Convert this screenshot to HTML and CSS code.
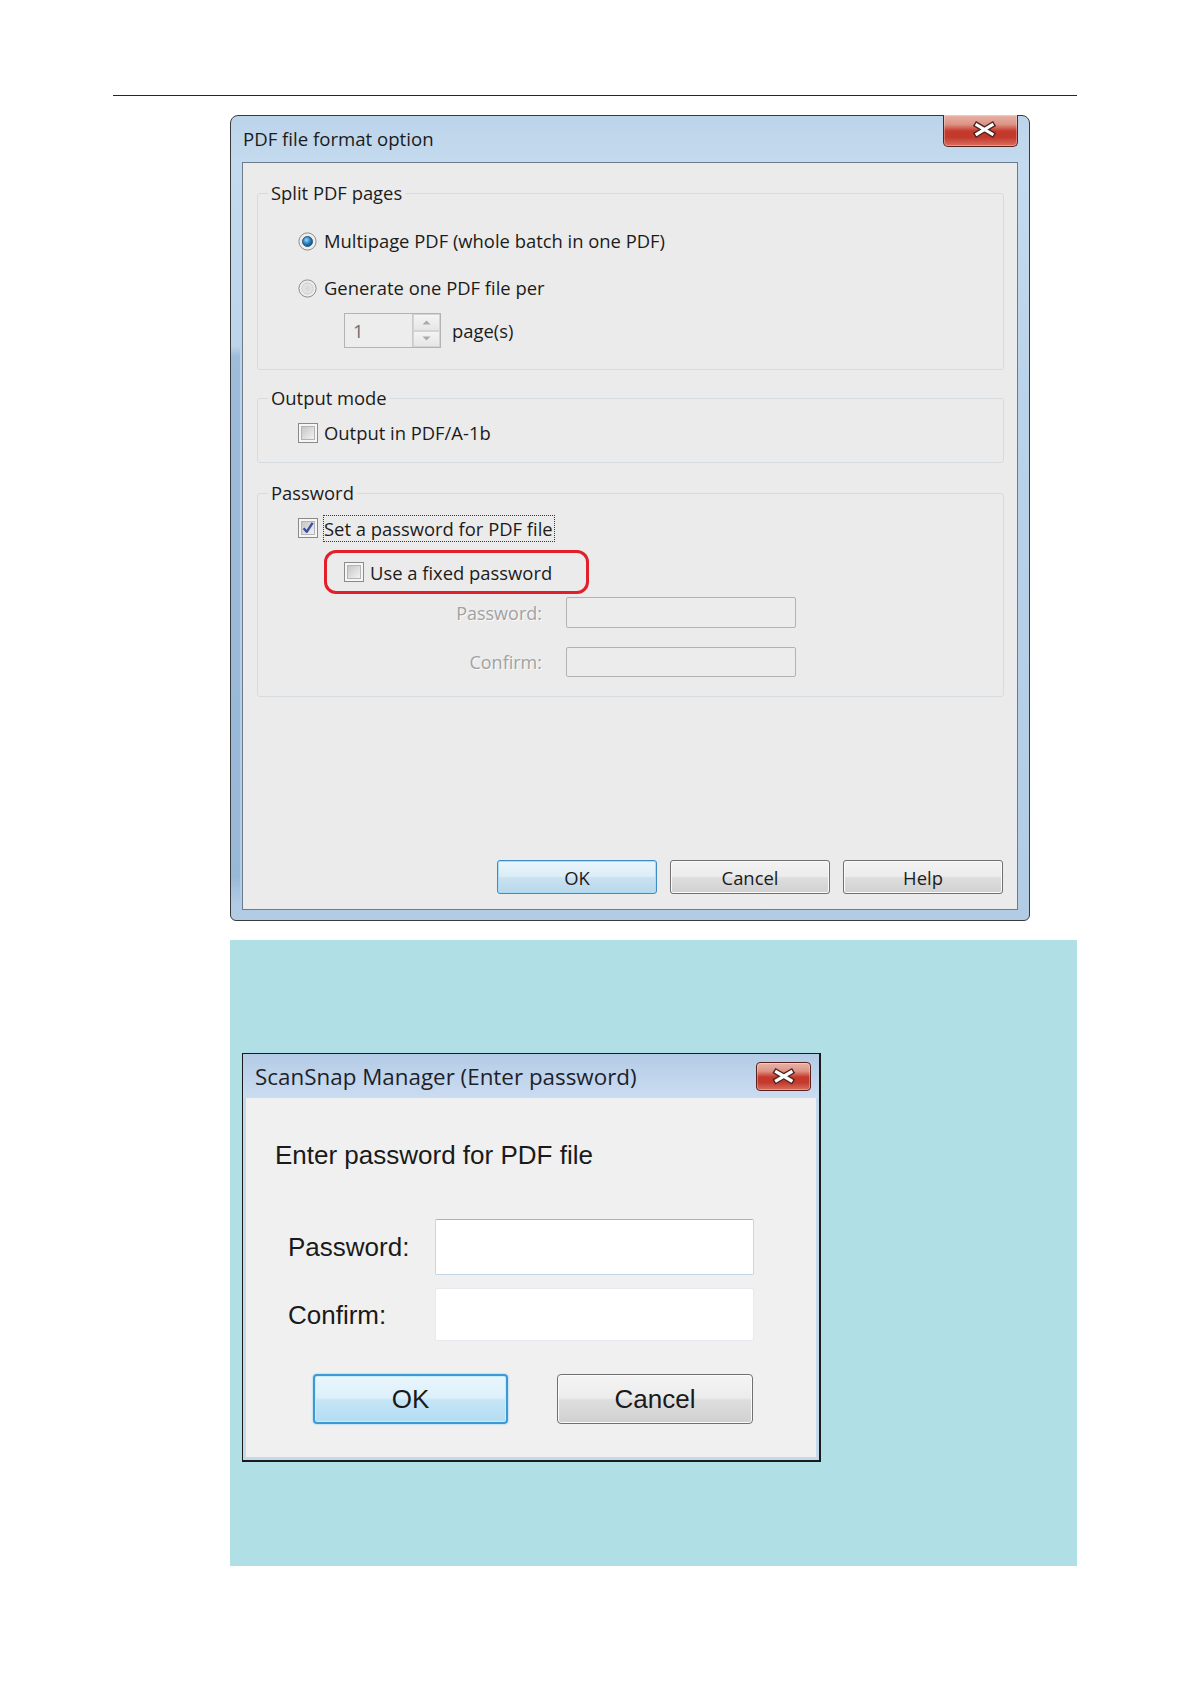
FILE: index.html
```html
<!DOCTYPE html>
<html lang="en">
<head>
<meta charset="utf-8">
<title>PDF file format option</title>
<link rel="stylesheet" href="styles.css">
</head>
<body>
<div class="page">
  <div class="rule"></div>

  <div class="win7">
    <div class="titlebar">
      <span class="title">PDF file format option</span>
      <div class="close close-lg">
        <svg width="75" height="31" viewBox="0 0 75 31">
          <path d="M33 10 L48 19 M48 10 L33 19" stroke="#4d2420" stroke-width="6" stroke-linecap="square"/>
          <path d="M33 10 L48 19 M48 10 L33 19" stroke="#ffffff" stroke-width="3.2" stroke-linecap="square"/>
        </svg>
      </div>
    </div>
    <div class="client">
      <fieldset class="group g1">
        <legend>Split PDF pages</legend>
        <div class="gbody gb1">
          <div class="row">
            <svg class="radio" width="19" height="19" viewBox="0 0 19 19">
              <defs>
                <radialGradient id="rf1" cx="50%" cy="50%" r="60%"><stop offset="0" stop-color="#dadada"/><stop offset="1" stop-color="#f7f7f7"/></radialGradient>
                <radialGradient id="rd1" cx="40%" cy="35%" r="70%"><stop offset="0" stop-color="#9ad6f8"/><stop offset="0.5" stop-color="#2a86c6"/><stop offset="1" stop-color="#10487a"/></radialGradient>
              </defs>
              <circle cx="9.5" cy="9.5" r="8.6" fill="url(#rf1)" stroke="#8a8a8a"/>
              <circle cx="9.5" cy="9.5" r="5" fill="url(#rd1)" stroke="#18446c" stroke-width="0.8"/>
            </svg>
            <span class="lbl">Multipage PDF (whole batch in one PDF)</span>
          </div>
          <div class="row r2">
            <svg class="radio" width="19" height="19" viewBox="0 0 19 19">
              <defs>
                <radialGradient id="rf2" cx="50%" cy="50%" r="60%"><stop offset="0" stop-color="#d6d6d6"/><stop offset="1" stop-color="#f7f7f7"/></radialGradient>
              </defs>
              <circle cx="9.5" cy="9.5" r="8.6" fill="url(#rf2)" stroke="#8a8a8a"/>
              <circle cx="9.5" cy="9.5" r="5.5" fill="none" stroke="#cfcfcf"/>
            </svg>
            <span class="lbl">Generate one PDF file per</span>
          </div>
          <div class="row spinrow">
            <div class="spin">
              <span class="spinval">1</span>
              <div class="spinbtns">
                <div class="sb"><svg width="9" height="5" viewBox="0 0 9 5"><path d="M0.5 4.5 L4.5 0.5 L8.5 4.5 Z" fill="#a9a9a9"/></svg></div>
                <div class="sb"><svg width="9" height="5" viewBox="0 0 9 5"><path d="M0.5 0.5 L4.5 4.5 L8.5 0.5 Z" fill="#a9a9a9"/></svg></div>
              </div>
            </div>
            <span class="pages">page(s)</span>
          </div>
        </div>
      </fieldset>

      <fieldset class="group g2">
        <legend>Output mode</legend>
        <div class="gbody gb2">
          <div class="row">
            <svg class="cb" width="20" height="20" viewBox="0 0 20 20">
              <defs><linearGradient id="cg1" x1="0" y1="0" x2="1" y2="1"><stop offset="0" stop-color="#c4c4c4"/><stop offset="1" stop-color="#f4f4f4"/></linearGradient></defs>
              <rect x="0.5" y="0.5" width="19" height="19" fill="#f6f6f6" stroke="#8a8a8a"/>
              <rect x="3.5" y="3.5" width="13" height="13" fill="url(#cg1)" stroke="#b4b4b4"/>
            </svg>
            <span class="lbl cbl">Output in PDF/A-1b</span>
          </div>
        </div>
      </fieldset>

      <fieldset class="group g3">
        <legend>Password</legend>
        <div class="gbody gb3">
          <div class="row">
            <svg class="cb" width="20" height="20" viewBox="0 0 20 20">
              <defs><linearGradient id="cg2" x1="0" y1="0" x2="1" y2="1"><stop offset="0" stop-color="#c4c4c4"/><stop offset="1" stop-color="#f4f4f4"/></linearGradient></defs>
              <rect x="0.5" y="0.5" width="19" height="19" fill="#f6f6f6" stroke="#8a8a8a"/>
              <rect x="3.5" y="3.5" width="13" height="13" fill="url(#cg2)" stroke="#b4b4b4"/>
              <path d="M5.6 10.2 L8.7 13.8 L14.6 4.8" fill="none" stroke="#3b4ea3" stroke-width="2.4" stroke-linejoin="round"/>
            </svg>
            <span class="focus">Set a password for PDF file</span>
          </div>
          <div class="redbox">
            <svg class="cb" width="20" height="20" viewBox="0 0 20 20">
              <defs><linearGradient id="cg3" x1="0" y1="0" x2="1" y2="1"><stop offset="0" stop-color="#c4c4c4"/><stop offset="1" stop-color="#f4f4f4"/></linearGradient></defs>
              <rect x="0.5" y="0.5" width="19" height="19" fill="#f6f6f6" stroke="#8a8a8a"/>
              <rect x="3.5" y="3.5" width="13" height="13" fill="url(#cg3)" stroke="#b4b4b4"/>
            </svg>
            <span class="lbl cbl">Use a fixed password</span>
          </div>
          <div class="frow fr1">
            <span class="flbl">Password:</span>
            <div class="dfield"></div>
          </div>
          <div class="frow fr2">
            <span class="flbl">Confirm:</span>
            <div class="dfield"></div>
          </div>
        </div>
      </fieldset>

      <div class="buttons">
        <button class="btn def">OK</button>
        <button class="btn">Cancel</button>
        <button class="btn">Help</button>
      </div>
    </div>
  </div>

  <div class="panel">
    <div class="xp">
      <div class="xp-title">
        <span class="xp-caption">ScanSnap Manager (Enter password)</span>
        <div class="close close-sm">
          <svg width="53" height="27" viewBox="0 0 53 27">
            <path d="M19.5 9 L34 17.5 M34 9 L19.5 17.5" stroke="#4d2420" stroke-width="6" stroke-linecap="square"/>
            <path d="M19.5 9 L34 17.5 M34 9 L19.5 17.5" stroke="#ffffff" stroke-width="3.2" stroke-linecap="square"/>
          </svg>
        </div>
      </div>
      <div class="xp-client">
        <div class="prompt">Enter password for PDF file</div>
        <div class="prow pr1">
          <span class="plbl">Password:</span>
          <div class="pfield pf1"></div>
        </div>
        <div class="prow pr2">
          <span class="plbl">Confirm:</span>
          <div class="pfield pf2"></div>
        </div>
        <div class="pbuttons">
          <button class="pbtn pdef">OK</button>
          <button class="pbtn pcancel">Cancel</button>
        </div>
      </div>
    </div>
  </div>
</div>
</body>
</html>
```

FILE: styles.css
```css
body {
  margin: 0;
  background: #ffffff;
}

.page {
  width: 964px;
  margin-left: 113px;
  padding-top: 95px;
  padding-bottom: 100px;
}

.rule {
  height: 1px;
  background: #262626;
}

/* ---------- Windows 7 style dialog ---------- */
.win7 {
  margin: 19px 0 0 117px;
  width: 800px;
  height: 806px;
  box-sizing: border-box;
  border: 1px solid #3a3a3a;
  border-radius: 8px 8px 6px 6px;
  padding: 0 11px 10px;
  display: flex;
  flex-direction: column;
  background:
    linear-gradient(180deg, rgba(120,160,200,0) 230px, rgba(120,160,200,0.45) 240px, rgba(120,160,200,0.45) 760px, rgba(120,160,200,0) 790px) left / 9px 100% no-repeat,
    linear-gradient(180deg, #bcd4ea 0%, #c4daee 6%, #b9d1e9 40%, #b3cce6 100%);
  font-family: "Open Sans", "Noto Sans", sans-serif;
  color: #1b1b1b;
}

.titlebar {
  height: 46px;
  display: flex;
  justify-content: space-between;
  align-items: flex-start;
}

.title {
  font-size: 18.6px;
  line-height: 24px;
  margin-top: 11px;
  margin-left: 1px;
}

.close {
  box-sizing: border-box;
  border: 1px solid #5a221d;
  border-top: none;
  border-radius: 0 0 5px 5px;
  background: linear-gradient(180deg, #e9b3a8 0%, #dc9485 30%, #c6392c 52%, #c2392d 72%, #d9705f 100%);
  box-shadow: inset 0 0 0 1px rgba(255,255,255,0.3);
}

.close svg {
  display: block;
}

.close-lg {
  width: 75px;
  height: 32px;
  margin-top: -1px;
}

.client {
  flex: 1;
  border: 1px solid #6b7b8c;
  background: #ebebeb;
  padding: 18px 13px 15px 14px;
  display: flex;
  flex-direction: column;
}

.group {
  margin: 0;
  padding: 0;
  min-width: 0;
  border: 1px solid #d6dbdf;
  border-radius: 3px;
}

.group legend {
  margin-left: 10px;
  padding: 0 3px;
  font-size: 18.4px;
  line-height: 24px;
}

.g2 { margin-top: 16px; }
.g3 { margin-top: 18px; }

.gbody {
  padding-left: 40px;
}

.gb1 { padding-top: 23px; padding-bottom: 21px; }
.gb2 { padding-top: 10px; padding-bottom: 16px; }
.gb3 { padding-top: 10px; padding-bottom: 19px; }

.row {
  display: flex;
  align-items: center;
  height: 26px;
  font-size: 18.4px;
  line-height: 26px;
}

.row svg {
  flex: none;
  display: block;
}

.r2 { margin-top: 21px; }

.lbl { margin-left: 7px; }
.cbl { margin-left: 6px; }

.spinrow {
  margin-top: 12px;
  height: 35px;
}

.spin {
  margin-left: 46px;
  width: 97px;
  height: 35px;
  box-sizing: border-box;
  border: 1px solid #b3b3b3;
  background: #ededed;
  display: flex;
}

.spinval {
  flex: 1;
  padding-left: 8px;
  color: #6e6e6e;
  line-height: 33px;
}

.spinbtns {
  width: 27px;
  display: flex;
  flex-direction: column;
  border-left: 1px solid #c9c9c9;
}

.sb {
  flex: 1;
  display: flex;
  align-items: center;
  justify-content: center;
  background: linear-gradient(180deg, #f4f4f4, #e6e6e6);
  border: 1px solid #d4d4d4;
}

.pages { margin-left: 11px; }

.focus {
  margin-left: 5px;
  border: 1px dotted #3a3a3a;
  line-height: 25px;
  padding-right: 1px;
}

.redbox {
  margin: 9px 0 0 26px;
  width: 265px;
  height: 44px;
  box-sizing: border-box;
  border: 3px solid #e1202c;
  border-radius: 12px;
  padding-left: 17px;
  display: flex;
  align-items: center;
  font-size: 18.4px;
}

.redbox svg { display: block; flex: none; }

.frow {
  display: flex;
  align-items: center;
}

.fr1 { margin-top: 3px; }
.fr2 { margin-top: 19px; }

.flbl {
  width: 244px;
  text-align: right;
  font-size: 18px;
  color: #a2a2a2;
  text-shadow: 1px 1px 0 #fafafa;
}

.dfield {
  margin-left: 24px;
  width: 230px;
  height: 31px;
  box-sizing: border-box;
  border: 1px solid #b2b2b2;
  border-radius: 2px;
  background: #ececec;
}

.fr2 .dfield { height: 30px; }

.buttons {
  margin-top: auto;
  display: flex;
  justify-content: flex-end;
  gap: 13px;
  padding-right: 1px;
}

.btn {
  width: 160px;
  height: 34px;
  box-sizing: border-box;
  padding: 0;
  border: 1px solid #707070;
  border-radius: 3px;
  background: linear-gradient(180deg, #f3f3f3 0%, #ececec 48%, #dedede 52%, #d0d0d0 100%);
  box-shadow: inset 0 0 0 1px #fbfbfb;
  font-family: "Open Sans", "Noto Sans", sans-serif;
  font-size: 18.4px;
  color: #1b1b1b;
}

.btn.def {
  border-color: #3d8dc4;
  background: linear-gradient(180deg, #eaf5fb 0%, #dcedf7 48%, #c9e2f1 52%, #b9d8ea 100%);
  box-shadow: inset 0 0 0 1px #a9dcf6;
}

/* ---------- cyan panel with small dialog ---------- */
.panel {
  margin: 19px 0 0 117px;
  width: 847px;
  height: 626px;
  box-sizing: border-box;
  background: #b0e0e6;
  padding: 113px 0 0 12px;
}

.xp {
  width: 579px;
  height: 409px;
  box-sizing: border-box;
  border: 1px solid #1a1a1a;
  border-right-width: 2px;
  border-bottom-width: 2px;
  background: #c5d9ee;
  display: flex;
  flex-direction: column;
}

.xp-title {
  height: 44px;
  flex: none;
  display: flex;
  justify-content: space-between;
  align-items: flex-start;
  background: linear-gradient(180deg, #b4cbe6 0%, #bfd4ec 50%, #cadcf0 100%);
}

.xp-caption {
  margin: 9px 0 0 12px;
  font-family: "Open Sans", "Noto Sans", sans-serif;
  font-size: 22.4px;
  line-height: 28px;
  color: #1f1f2a;
}

.close-sm {
  width: 55px;
  height: 29px;
  margin: 8px 8px 0 0;
  border-top: 1px solid #5a221d;
  border-radius: 4px;
}

.xp-client {
  flex: 1;
  margin: 0 3px 3px;
  background: #f0f0f0;
  font-family: "Liberation Sans", Arial, sans-serif;
  color: #1a1a1a;
}

.prompt {
  margin: 42px 0 0 29px;
  font-size: 26px;
  line-height: 30px;
}

.prow {
  display: flex;
  align-items: center;
  margin-left: 42px;
}

.pr1 { margin-top: 49px; }
.pr2 { margin-top: 13px; }

.plbl {
  width: 147px;
  font-size: 26px;
  line-height: 30px;
}

.pfield {
  width: 319px;
  box-sizing: border-box;
  background: #ffffff;
  border-radius: 2px;
}

.pf1 {
  height: 56px;
  border: 1px solid #c6d6e6;
  border-top-color: #9fb6cf;
}

.pf2 {
  height: 53px;
  border: 1px solid #e6eaee;
}

.pbuttons {
  display: flex;
  gap: 49px;
  margin: 33px 0 0 67px;
}

.pbtn {
  height: 50px;
  box-sizing: border-box;
  padding: 0;
  border: 1px solid #707070;
  border-radius: 4px;
  background: linear-gradient(180deg, #f4f4f4 0%, #ececec 48%, #dedede 52%, #d0d0d0 100%);
  box-shadow: inset 0 0 0 1px #fbfbfb;
  font-family: "Liberation Sans", Arial, sans-serif;
  font-size: 26px;
  color: #1a1a1a;
}

.pdef {
  width: 195px;
  border: 2px solid #3b9ad6;
  background: linear-gradient(180deg, #eaf6fc 0%, #dcf0fa 48%, #c4e6f7 52%, #b4dcf1 100%);
  box-shadow: inset 0 0 0 1px #c9ecfb, 0 0 2px #6cc0ea;
}

.pcancel {
  width: 196px;
}
```
